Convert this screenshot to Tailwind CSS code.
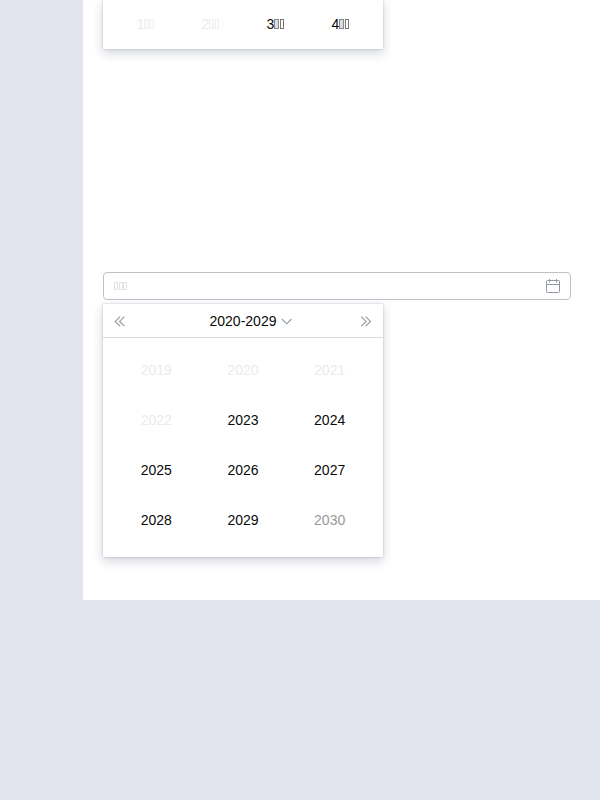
<!DOCTYPE html>
<html lang="zh">
<head>
<meta charset="utf-8">
<title>Date picker</title>
<script src="https://cdn.jsdelivr.net/npm/@tailwindcss/browser@4"></script>
</head>
<body class="h-[800px] overflow-hidden bg-[#e1e4ec] pl-[83px] font-['Liberation_Sans',Arial,sans-serif] text-sm text-[#0a0a0a]">
<main class="h-[600px] bg-white pl-5 pr-[29px]">
  <section class="h-[49px] w-[280px] bg-white px-[10px] shadow-[0_0_2px_rgba(30,41,75,0.25),0_4px_10px_rgba(30,41,75,0.2)]">
    <div class="grid h-12 grid-cols-4 place-items-center text-center">
      <div class="flex items-center text-[#ebebeb]"><span>1</span><i class="h-[10px] w-[5px] border border-[#f1f1f1] bg-[#fafafa]"></i><i class="ml-px h-[10px] w-1 border border-[#efefef]"></i></div>
      <div class="flex items-center text-[#ebebeb]"><span>2</span><i class="h-[10px] w-[5px] border border-[#f1f1f1] bg-[#fafafa]"></i><i class="ml-px h-[10px] w-1 border border-[#efefef]"></i></div>
      <div class="flex items-center"><span>3</span><i class="h-[10px] w-[5px] border border-[#888] bg-[#ddd]"></i><i class="ml-px h-[10px] w-1 border border-[#777]"></i></div>
      <div class="flex items-center"><span>4</span><i class="h-[10px] w-[5px] border border-[#888] bg-[#ddd]"></i><i class="ml-px h-[10px] w-1 border border-[#777]"></i></div>
    </div>
  </section>
  <div class="mt-[223px] flex h-7 w-[468px] items-center justify-between rounded-[4px] border border-[#bfc1c9] pl-[10px] pr-[9px]">
    <div class="flex gap-[0.5px]"><i class="h-2 w-1 border border-[#e4e4e4]"></i><i class="h-2 w-1 border border-[#e4e4e4]"></i><i class="h-2 w-1 border border-[#e4e4e4]"></i></div>
    <svg class="size-4" viewBox="0 0 16 16" fill="none" stroke="#9296a3" stroke-width="1"><rect x="1.5" y="2.5" width="13" height="12" rx="1"/><path d="M1.5 6.5h13M4.5 1v3.5M11.5 1v3.5"/></svg>
  </div>
  <section class="mt-1 h-[253px] w-[280px] bg-white shadow-[0_0_2px_rgba(30,41,75,0.25),0_4px_10px_rgba(30,41,75,0.2)]">
    <header class="flex h-[34px] items-center justify-between border-b border-[#d9dbdf] px-[10px]">
      <svg class="mt-px size-[14px]" viewBox="0 0 14 14" fill="none" stroke="#999" stroke-width="1.15"><path d="M7 2.6L2.2 7.4L7 12.2M11.4 2.6L6.6 7.4L11.4 12.2"/></svg>
      <div class="ml-[17px] flex items-center gap-[3px]"><span>2020-2029</span><svg class="size-[14px]" viewBox="0 0 14 14" fill="none" stroke="#999" stroke-width="1.15"><path d="M2.9 5L7.7 9.8L12.5 5"/></svg></div>
      <svg class="mt-px size-[14px]" viewBox="0 0 14 14" fill="none" stroke="#999" stroke-width="1.15"><path d="M2.3 2.6L7.1 7.4L2.3 12.2M6.7 2.6L11.5 7.4L6.7 12.2"/></svg>
    </header>
    <div class="grid grid-cols-3 auto-rows-[50px] place-items-center px-[10px] pt-[7px]">
      <span class="text-[#ebebeb]">2019</span><span class="text-[#ebebeb]">2020</span><span class="text-[#ebebeb]">2021</span>
      <span class="text-[#ebebeb]">2022</span><span>2023</span><span>2024</span>
      <span>2025</span><span>2026</span><span>2027</span>
      <span>2028</span><span>2029</span><span class="text-[#999]">2030</span>
    </div>
  </section>
</main>
</body>
</html>
